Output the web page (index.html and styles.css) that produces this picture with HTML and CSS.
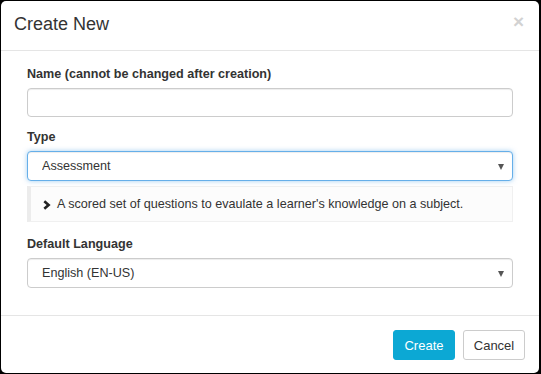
FILE: index.html
```html
<!DOCTYPE html>
<html lang="en">
<head>
  <meta charset="UTF-8" />
  <title>Create New</title>
  <link rel="stylesheet" href="styles.css">
</head>
<body>
  <div class="modal">
    <div class="modal-header">
      <h4 class="modal-title">Create New</h4>
      <button class="close" type="button">&times;</button>
    </div>

    <div class="modal-body">
      <div class="form-group first">
        <label for="name">Name (cannot be changed after creation)</label>
        <input type="text" id="name" class="form-control" />
      </div>

      <div class="form-group">
        <label for="type">Type</label>
        <div class="select-wrap">
          <select id="type" class="form-control focused">
            <option>Assessment</option>
            <option>Survey</option>
          </select>
        </div>
        <div class="type-desc">
          <svg class="chev" width="8" height="10" viewBox="0 0 8 10">
            <path d="M1.3 1.3 L5.6 5 L1.3 8.7" fill="none" stroke="#222" stroke-width="2.6"/>
          </svg>
          A scored set of questions to evaulate a learner's knowledge on a subject.
        </div>
      </div>

      <div class="form-group last">
        <label for="lang">Default Language</label>
        <div class="select-wrap">
          <select id="lang" class="form-control">
            <option>English (EN-US)</option>
          </select>
        </div>
      </div>
    </div>

    <div class="modal-footer">
      <button class="btn btn-primary">Create</button>
      <button class="btn btn-default">Cancel</button>
    </div>
  </div>
</body>
</html>
```

FILE: styles.css
```css
html, body {
  margin: 0;
  padding: 0;
  background: #000;
  font-family: "Liberation Sans", Arial, Helvetica, sans-serif;
  color: #333;
}
* {
  box-sizing: border-box;
}
.modal {
  width: 538px;
  height: 372px;
  margin: 1px 0 0 1px;
  background: #fff;
  border-radius: 5px;
  display: flex;
  flex-direction: column;
}
.modal-header {
  height: 50px;
  padding: 0 15px 0 13px;
  border-bottom: 1px solid #e5e5e5;
  display: flex;
  align-items: center;
  justify-content: space-between;
}
.modal-title {
  margin: 0 0 2px;
  font-size: 18px;
  font-weight: normal;
  color: #333;
}
.close {
  align-self: flex-start;
  margin-top: 11px;
  padding: 0;
  border: none;
  background: none;
  font-family: "Liberation Sans", Arial, sans-serif;
  font-size: 19px;
  font-weight: bold;
  line-height: 1;
  color: #d2d2d2;
  cursor: pointer;
}
.modal-body {
  padding: 14px 26px 0;
  flex: 1;
}
.form-group {
  margin-bottom: 13px;
}
.form-group.first {
  margin-bottom: 11px;
}
.form-group.last {
  margin-bottom: 0;
}
label {
  display: block;
  font-size: 12.6px;
  font-weight: bold;
  line-height: 18px;
  margin-bottom: 5px;
  color: #333;
}
.form-control {
  display: block;
  width: 100%;
  height: 30px;
  padding: 0 14px;
  font-family: "Liberation Sans", Arial, sans-serif;
  font-size: 12.6px;
  color: #555;
  background: #fff;
  border: 1px solid #ccc;
  border-radius: 4px;
  box-shadow: inset 0 1px 1px rgba(0,0,0,0.075);
  outline: none;
}
.form-group.first .form-control {
  height: 29px;
}
select.form-control {
  -webkit-appearance: none;
  appearance: none;
  color: #333;
}
.form-control.focused {
  border-color: #66afe9;
  box-shadow: inset 0 1px 1px rgba(0,0,0,0.075), 0 0 5px rgba(102,175,233,0.6);
}
.select-wrap {
  position: relative;
}
.select-wrap::after {
  content: "";
  position: absolute;
  right: 9px;
  top: 13px;
  border-left: 3.5px solid transparent;
  border-right: 3.5px solid transparent;
  border-top: 6px solid #555;
  pointer-events: none;
}
.type-desc {
  margin-top: 5px;
  height: 36px;
  padding: 0 12px;
  display: flex;
  align-items: center;
  gap: 6px;
  font-size: 12.6px;
  color: #333;
  background: #fcfcfc;
  border: 1px solid #f0f0f0;
  border-left: 4px solid #ececec;
}
.chev {
  flex: none;
  margin-top: 1px;
}
.modal-footer {
  padding: 14px 14px 13px;
  border-top: 1px solid #e5e5e5;
  display: flex;
  justify-content: flex-end;
  gap: 8px;
}
.btn {
  width: 62px;
  height: 30px;
  padding: 0;
  font-family: "Liberation Sans", Arial, sans-serif;
  font-size: 13px;
  border-radius: 3px;
  cursor: pointer;
}
.btn-primary {
  background: #0ca8d4;
  border: 1px solid #0ca8d4;
  color: #fff;
}
.btn-default {
  background: #fff;
  border: 1px solid #ccc;
  color: #333;
}
```
